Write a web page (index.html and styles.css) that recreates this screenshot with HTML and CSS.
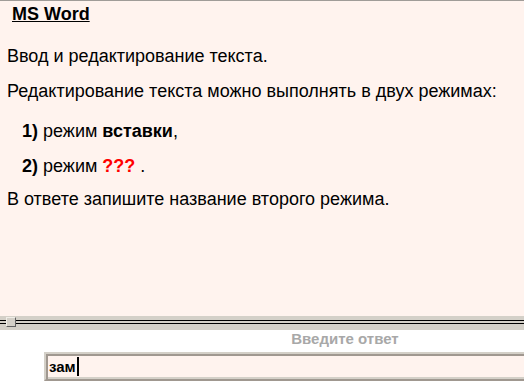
FILE: index.html
```html
<!DOCTYPE html>
<html lang="ru">
<head>
<meta charset="utf-8">
<link rel="stylesheet" href="styles.css">
</head>
<body>
<div class="page">
  <div class="content">
    <div class="title">MS Word</div>
    <p class="p1">Ввод и редактирование текста.</p>
    <p class="p2">Редактирование текста можно выполнять в двух режимах:</p>
    <p class="item i1"><b>1)</b> режим <b>вставки</b>,</p>
    <p class="item i2"><b>2)</b> режим <b class="q">???</b> .</p>
    <p class="p3">В ответе запишите название второго режима.</p>
  </div>
  <div class="splitter">
    <div class="lines"></div>
    <div class="handle"></div>
  </div>
  <div class="answer">
    <div class="label">Введите ответ</div>
    <div class="field">зам<span class="caret"></span></div>
  </div>
</div>
</body>
</html>
```
FILE: styles.css
```css
html, body {
  margin: 0;
  padding: 0;
  background: #ffffff;
  overflow: hidden;
}
.page {
  width: 524px;
  height: 387px;
  overflow: hidden;
  font-family: "Liberation Sans", Arial, sans-serif;
  color: #000;
}
.content {
  box-sizing: border-box;
  height: 316px;
  border-top: 1px solid #a09c98;
  background: #fff3ee;
  padding: 3px 7px 0 7px;
  font-size: 18px;
  line-height: 20px;
}
.content p {
  margin: 0;
}
.title {
  margin-left: 5px;
  font-weight: bold;
  text-decoration: underline;
}
.content .p1 { margin-top: 22px; }
.content .p2 { margin-top: 15px; }
.content .i1 { margin-top: 20px; }
.content .i2 { margin-top: 15px; }
.content .p3 { margin-top: 13px; }
.item {
  padding-left: 15px;
}
.q {
  color: #ff0000;
}
.splitter {
  position: relative;
  height: 14px;
  background: #d4d0c8;
}
.lines {
  position: absolute;
  left: 0;
  right: 0;
  top: 4px;
  height: 2px;
  border-top: 1px solid #000;
  border-bottom: 1px solid #000;
}
.handle {
  position: absolute;
  left: 6px;
  top: 1px;
  width: 8px;
  height: 8px;
  background: #d4d0c8;
  border-top: 1px solid #f0eee8;
  border-left: 1px solid #f0eee8;
  border-right: 1px solid #606060;
  border-bottom: 1px solid #606060;
}
.answer {
  padding: 0 0 0 44px;
  width: 602px;
}
.label {
  text-align: center;
  font-size: 15px;
  line-height: 17px;
  font-weight: bold;
  color: #a8a8a8;
  width: 602px;
}
.field {
  box-sizing: border-box;
  margin-top: 5px;
  width: 602px;
  height: 29px;
  background: #fff3ee;
  border: 2px solid;
  border-color: #d4d0c8 #a09890 #a09890 #d4d0c8;
  box-shadow: inset 2px 2px 0 #a09890, inset -2px -2px 0 #d4d0c8;
  padding: 3px 3px 0 3px;
  font-size: 15px;
  line-height: 17px;
  font-weight: bold;
}
.caret {
  display: inline-block;
  width: 2px;
  height: 19px;
  background: #000;
  vertical-align: -4px;
  margin-left: 1px;
}
```
